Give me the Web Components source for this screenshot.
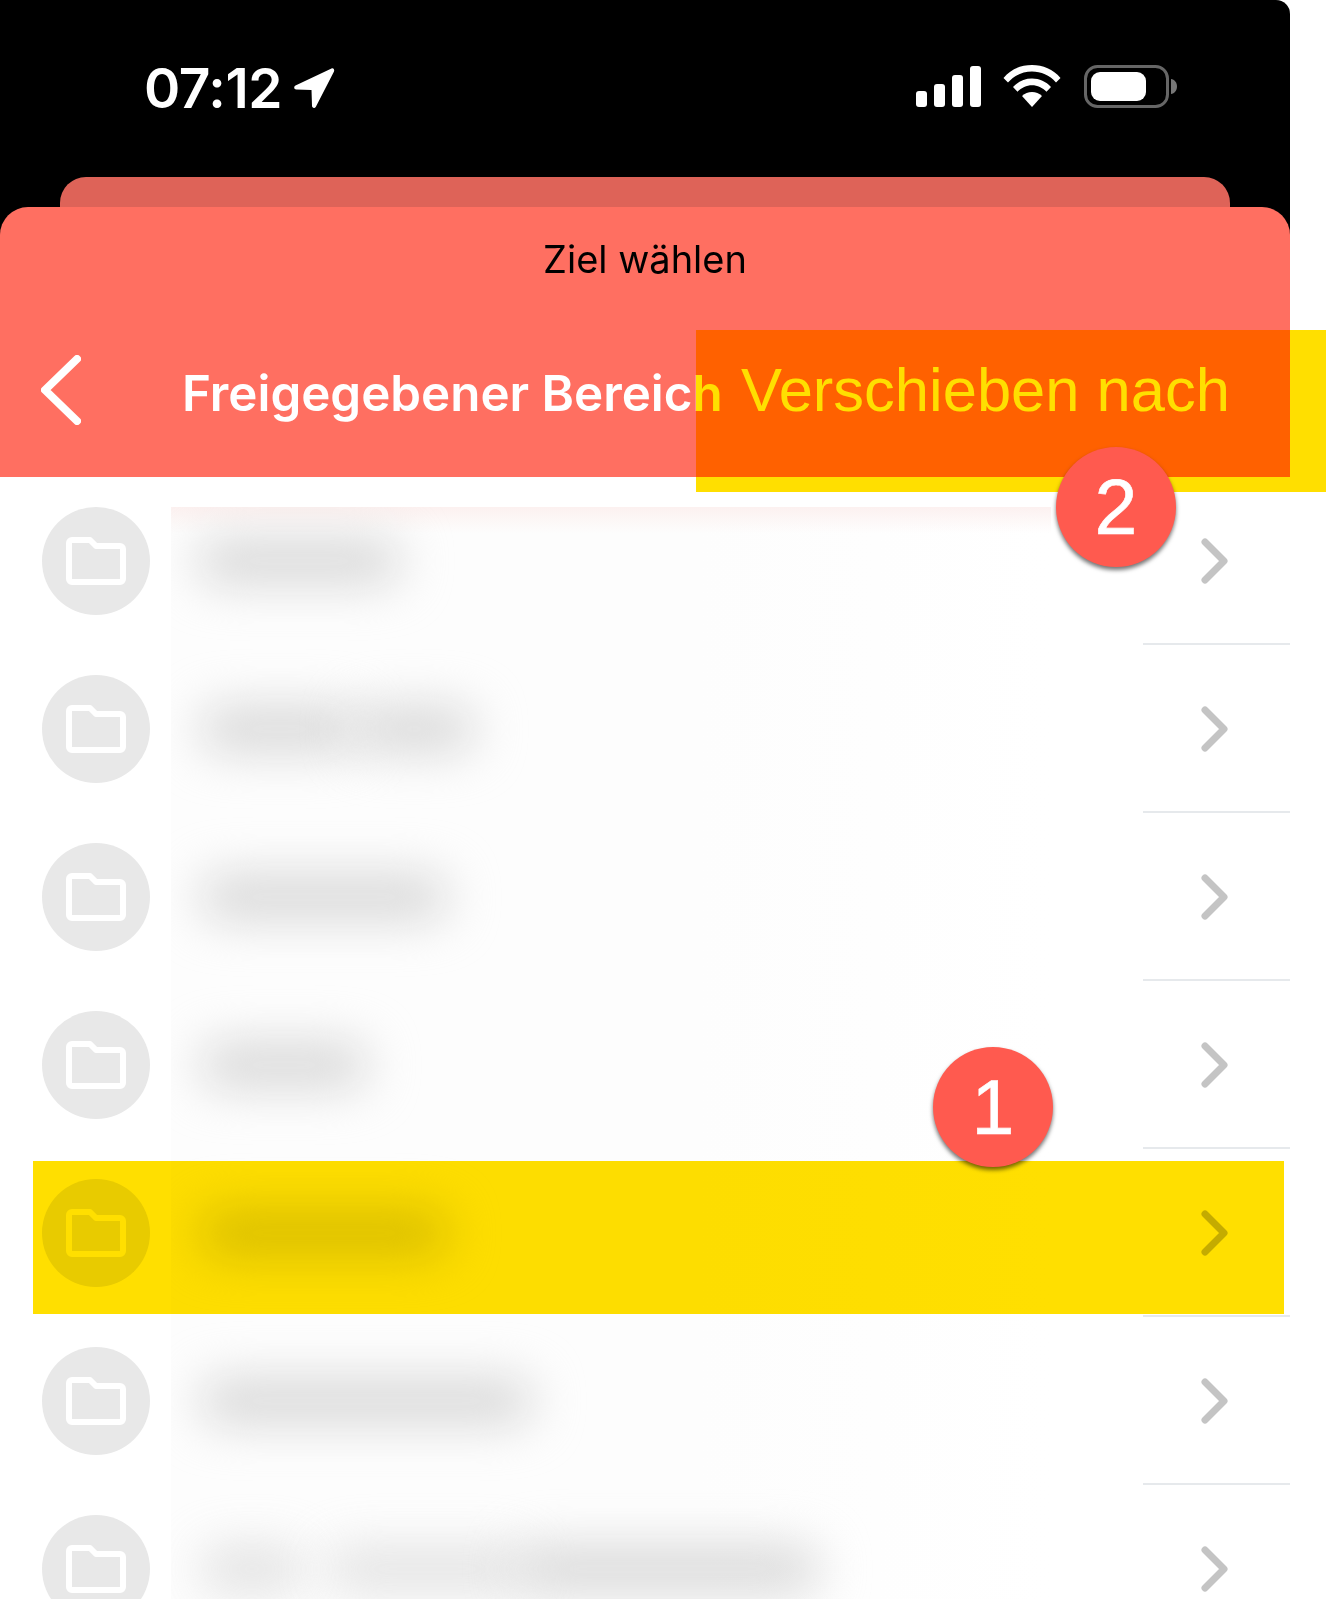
<!DOCTYPE html>
<html lang="de">
<head>
<meta charset="utf-8">
<title>Ziel wählen</title>
<style>
    html, body { margin: 0; height: 1599px; overflow: hidden; background: #fff; }
    body { font-family: Inter, "Liberation Sans", sans-serif; }
</style>
</head>
<body>
<app-screen>
    <status-bar time="07:12"></status-bar>
    <nav-sheet heading="Ziel wählen" location="Freigegebener Bereich"></nav-sheet>
    <folder-row bars="196:206" tint></folder-row>
    <folder-row bars="199:161,352:124"></folder-row>
    <folder-row bars="199:250"></folder-row>
    <folder-row bars="199:170"></folder-row>
    <folder-row bars="199:250"></folder-row>
    <folder-row bars="199:335"></folder-row>
    <folder-row bars="199:106:.75,325:205:.7,515:305"></folder-row>
</app-screen>

<mark-box style="left:696px;top:330px;width:630px;height:162px">Verschieben nach</mark-box>
<mark-box style="left:33px;top:1161px;width:1251px;height:153px"></mark-box>

<step-badge style="left:933px;top:1047px">1</step-badge>
<step-badge style="left:1056px;top:447px">2</step-badge>

<script>
'use strict'

const statusTemplate = document.createElement('template')
statusTemplate.innerHTML = /* html */`
<style>
    :host {
        display: flex;
        align-items: flex-start;
        height: 177px;
        box-sizing: border-box;
        padding: 66px 113px 0 144px;
        background: #000;
        border-radius: 0 14px 0 0;
        color: #fff;
    }
    .time {
        font: 600 55px/44px Inter, "Liberation Sans", sans-serif;
        letter-spacing: -.4px;
    }
    .arrow { margin: 1px 0 0 11px; }
    .icons { margin-left: auto; display: flex; align-items: flex-start; gap: 23px; }
    .signal { margin-right: -1px; }
    .wifi, .battery { margin-top: -1px; }
</style>
<span class="time"></span>
<svg class="arrow" width="42" height="42" viewBox="0 0 42 42">
    <path d="M38.5 1.500 2.500 18.500c-2 1-1.500 4 .7 4l15.300.5.500 15.800c0 2.500 3 3 4 .7L41 4.500c.8-2-.7-3.700-2.500-3z" fill="#fff"/>
</svg>
<div class="icons">
    <svg class="signal" width="65" height="41" viewBox="0 0 65 41" fill="#fff">
        <rect x="0" y="25" width="11" height="16" rx="3"/>
        <rect x="18" y="18" width="11" height="23" rx="3"/>
        <rect x="36" y="9" width="11" height="32" rx="3"/>
        <rect x="54" y="0" width="11" height="41" rx="3"/>
    </svg>
    <svg class="wifi" width="58" height="42" viewBox="0 0 58 42" fill="#fff">
        <path d="M29 0C18 0 8 4 .5 13L5 17.500C11.500 10 20 6.500 29 6.500S46.500 10 53 17.500L57.500 13C50 4 40 0 29 0z"/>
        <path d="M29 13.500c-7.500 0-14 3-19 8.500l4.500 4.700c4-4 9-6.500 14.500-6.500s10.500 2.500 14.500 6.500L48 22c-5-5.500-11.500-8.500-19-8.500z"/>
        <path d="M29 27c-3.800 0-7.200 1.500-10 4l10 11 10-11c-2.800-2.500-6.200-4-10-4z"/>
    </svg>
    <svg class="battery" width="93" height="43" viewBox="0 0 93 43">
        <rect x="1.500" y="1.500" width="82" height="40" rx="12" fill="none" stroke="#666" stroke-width="3"/>
        <rect x="7" y="7" width="55" height="29" rx="9" fill="#fff"/>
        <path d="M87 14c3.500.5 6 3.500 6 7.500s-2.500 7-6 7.500z" fill="#777"/>
    </svg>
</div>`

class StatusBar extends HTMLElement {
    constructor() {
        super()
        this.attachShadow({mode: 'open'})
        this.shadowRoot.appendChild(statusTemplate.content.cloneNode(true))
    }
    connectedCallback() {
        this.shadowRoot.querySelector('.time').textContent = this.getAttribute('time')
    }
}
customElements.define('status-bar', StatusBar)

const sheetTemplate = document.createElement('template')
sheetTemplate.innerHTML = /* html */`
<style>
    :host { display: block; background: #000; }
    .back {
        height: 30px;
        margin: 0 60px;
        background: #DE6358;
        border-radius: 26px 26px 0 0;
    }
    .front {
        height: 270px;
        box-sizing: border-box;
        padding-top: 30px;
        background: #FF6F61;
        border-radius: 28px 28px 0 0;
    }
    .title {
        font: 400 38px/44px Inter, "Liberation Sans", sans-serif;
        text-align: center;
        color: #000;
    }
    .row {
        display: flex;
        align-items: center;
        height: 86px;
        margin-top: 66px;
        padding-left: 41px;
    }
    .row svg { flex: none; }
    .place {
        margin: 6px 0 0 101px;
        font: 600 49.300px/60px Inter, "Liberation Sans", sans-serif;
        white-space: nowrap;
        color: #fff;
    }
</style>
<div class="back"></div>
<div class="front">
    <div class="title"></div>
    <div class="row">
        <svg width="40" height="70" viewBox="0 0 40 70">
            <path d="M36 4 4 35l32 31" fill="none" stroke="#fff" stroke-width="8" stroke-linecap="round" stroke-linejoin="round"/>
        </svg>
        <span class="place"></span>
    </div>
</div>`

class NavSheet extends HTMLElement {
    constructor() {
        super()
        this.attachShadow({mode: 'open'})
        this.shadowRoot.appendChild(sheetTemplate.content.cloneNode(true))
    }
    connectedCallback() {
        this.shadowRoot.querySelector('.title').textContent = this.getAttribute('heading')
        this.shadowRoot.querySelector('.place').textContent = this.getAttribute('location')
    }
}
customElements.define('nav-sheet', NavSheet)

const rowTemplate = document.createElement('template')
rowTemplate.innerHTML = /* html */`
<style>
    :host {
        display: flex;
        align-items: center;
        position: relative;
        height: 168px;
        box-sizing: border-box;
        padding: 0 62px 0 42px;
        background: #fff;
    }
    .circle {
        flex: none;
        width: 108px;
        height: 108px;
        border-radius: 50%;
        background: #E8E8E8;
    }
    .circle svg { display: block; }
    .name {
        flex: none;
        position: relative;
        align-self: stretch;
        overflow: hidden;
        width: 880px;
        margin-left: 21px;
        background: linear-gradient(90deg, #FDFDFD 60%, #fff);
    }
    :host([tint]) .name { clip-path: inset(30px 0 0 0); }
    .bar {
        position: absolute;
        top: 61px;
        height: 46px;
        background: #D8D8D8;
        border-radius: 23px;
        filter: blur(24px);
    }
    .tint {
        display: none;
        position: absolute;
        inset: 30px 0 auto 0;
        height: 26px;
        background: linear-gradient(#FCF1F0, rgba(252, 241, 240, 0));
    }
    :host([tint]) .tint { display: block; }
    .chev { flex: none; margin-left: auto; }
    .line {
        position: absolute;
        right: 0;
        bottom: 0;
        width: 147px;
        height: 2px;
        background: #E6E9EC;
    }
</style>
<div class="circle">
    <svg width="108" height="108" viewBox="0 0 108 108">
        <path d="M27 36a3 3 0 0 1 3-3h18l6 6h24a3 3 0 0 1 3 3v30a3 3 0 0 1-3 3H30a3 3 0 0 1-3-3z" fill="none" stroke="#fff" stroke-width="6" stroke-linejoin="round"/>
    </svg>
</div>
<div class="name"><div class="tint"></div></div>
<svg class="chev" width="27" height="46" viewBox="0 0 27 46">
    <path d="M4 4 23 23 4 42" fill="none" stroke="#C4C4C4" stroke-width="7" stroke-linecap="round" stroke-linejoin="round"/>
</svg>
<div class="line"></div>`

class FolderRow extends HTMLElement {
    constructor() {
        super()
        this.attachShadow({mode: 'open'})
        this.shadowRoot.appendChild(rowTemplate.content.cloneNode(true))
    }
    connectedCallback() {
        // bars="x:width[:opacity],..." x is counted from the left of the page
        const name = this.shadowRoot.querySelector('.name')
        this.getAttribute('bars').split(',').forEach(part => {
            const [x, w, o] = part.split(':').map(Number)
            const bar = document.createElement('div')
            bar.className = 'bar'
            bar.style.left = (x - 171) + 'px'
            bar.style.width = w + 'px'
            if(o){ bar.style.opacity = o }
            name.appendChild(bar)
        })
    }
}
customElements.define('folder-row', FolderRow)

class AppScreen extends HTMLElement {
    constructor() {
        super()
        this.attachShadow({mode: 'open'}).innerHTML = /* html */`
<style>
    :host { display: block; width: 1290px; height: 1599px; overflow: hidden; }
</style>
<slot></slot>`
    }
}
customElements.define('app-screen', AppScreen)

class MarkBox extends HTMLElement {
    constructor() {
        super()
        this.attachShadow({mode: 'open'}).innerHTML = /* html */`
<style>
    :host {
        display: block;
        position: absolute;
        box-sizing: border-box;
        padding: 24px 0 0 45px;
        font: 400 61.500px/72px "Liberation Sans", sans-serif;
        white-space: nowrap;
        color: #FFDF00;
    }
    /* the marker is a multiply layer, the label stays on top of it */
    .fill {
        position: absolute;
        inset: 0;
        background: #FFDF00;
        mix-blend-mode: multiply;
    }
    .label { position: relative; }
</style>
<div class="fill"></div>
<span class="label"><slot></slot></span>`
    }
}
customElements.define('mark-box', MarkBox)

class StepBadge extends HTMLElement {
    constructor() {
        super()
        this.attachShadow({mode: 'open'}).innerHTML = /* html */`
<style>
    :host {
        display: flex;
        position: absolute;
        align-items: center;
        justify-content: center;
        width: 120px;
        height: 120px;
        border-radius: 50%;
        background: #FF5A4F;
        box-shadow: 0 3px 4px rgba(0, 0, 0, .55);
        font: 400 77px/1 "Liberation Sans", sans-serif;
        -webkit-text-stroke: .6px #fff;
        color: #fff;
    }
</style>
<slot></slot>`
    }
}
customElements.define('step-badge', StepBadge)
</script>
</body>
</html>
